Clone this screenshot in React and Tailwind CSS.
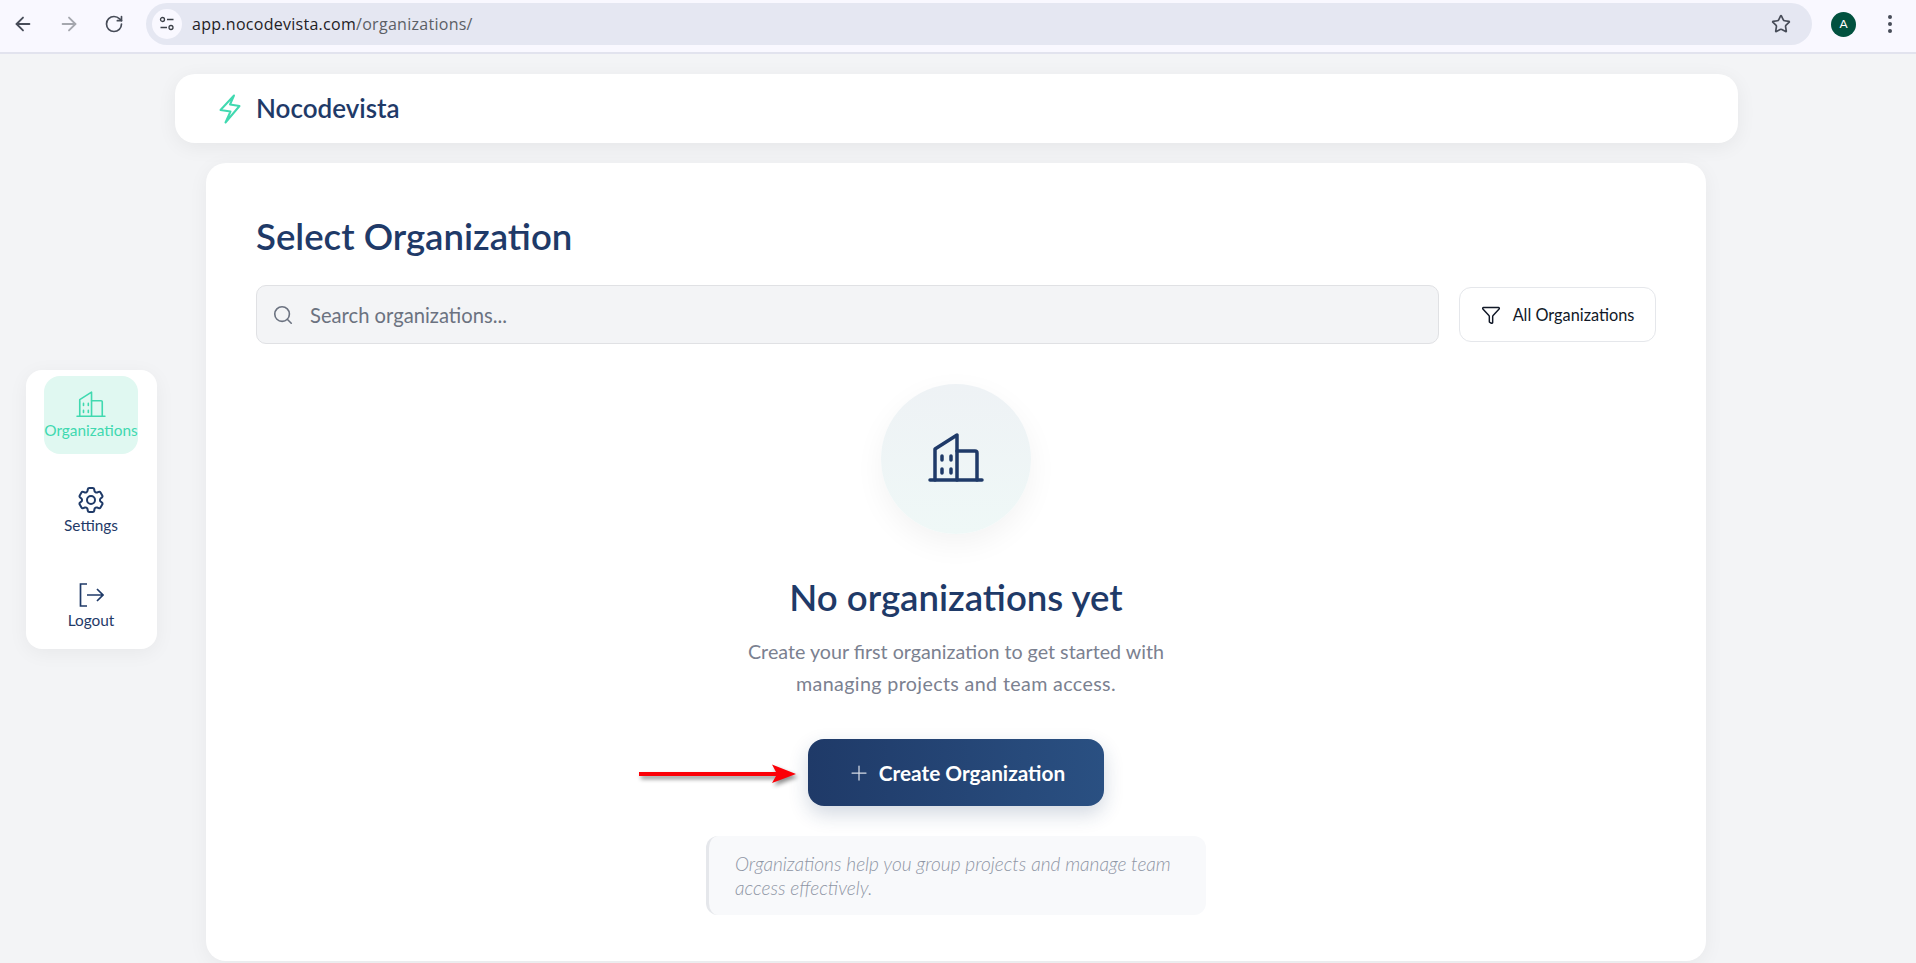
import React from "react";
import { ArrowLeft, ArrowRight, RotateCw, Star, Search, Funnel, Plus } from "lucide-react";
import { HiOutlineCog6Tooth } from "react-icons/hi2";

const font = { fontFamily: '"Lato", "Noto Sans", sans-serif' };

function Building({ className, sw = 3 }) {
  return (
    <svg viewBox="0 0 56 56" fill="none" stroke="currentColor" strokeWidth={sw} strokeLinecap="round" strokeLinejoin="round" className={className}>
      <path d="M2 49H54" />
      <path d="M7 49V18L29 4V49" />
      <path d="M29 20H47Q49 20 49 22V49" />
      <path d="M14 25V29M23 25V29M14 38V42M23 38V42" />
    </svg>
  );
}

function Logout({ className }) {
  return (
    <svg viewBox="0 0 26 26" fill="none" stroke="currentColor" strokeWidth="1.7" className={className}>
      <path d="M9 2H2.5V24H9" />
      <path d="M9 13H25M19 7L25 13L19 19" />
    </svg>
  );
}

function NavItem({ icon, label, active }) {
  return (
    <div className={`flex h-[78px] w-[94px] flex-col items-center justify-center rounded-2xl text-[15.4px] ${active ? "bg-[#e0f8f1] text-[#40d9b0]" : "text-[#1f3a68]"}`}>
      <div className="flex h-[29px] items-center">{icon}</div>
      <span className="leading-[20px]">{label}</span>
    </div>
  );
}

export default function App() {
  return (
    <div className="relative h-[963px] w-[1916px] overflow-hidden bg-[#f3f4f6]" style={font}>
      <div className="flex h-[54px] items-center border-b-2 border-[#e2e3ee] bg-[#f9f8ff] pb-[4px]">
        <div className="flex w-[146px] shrink-0 items-center gap-[24px] pl-[12px]">
          <ArrowLeft className="h-[22px] w-[22px] text-[#474c58]" strokeWidth={2} />
          <ArrowRight className="h-[22px] w-[22px] text-[#a5a7ae]" strokeWidth={2} />
          <RotateCw className="h-[20px] w-[20px] text-[#474c58]" strokeWidth={2} />
        </div>
        <div className="flex h-[42px] w-[1666px] shrink-0 items-center rounded-full bg-[#e5e7f2] pl-[6px] pr-[21px]">
          <div className="flex h-[30px] w-[30px] items-center justify-center rounded-full bg-[#f9f8ff]">
            <svg viewBox="0 0 16 16" fill="none" stroke="#3c4048" strokeWidth="1.3" className="h-[16px] w-[16px]">
              <circle cx="3.5" cy="3.5" r="2" />
              <path d="M8 3.5H14.5M1.5 11.5H8" />
              <circle cx="12" cy="11.5" r="2" />
            </svg>
          </div>
          <div className="ml-[10px] flex-1 text-[16px] tracking-[0.28px] text-[#1f2125]" style={{ fontFamily: '"Open Sans", sans-serif' }}>
            app.nocodevista.com<span className="text-[#5c5f66]">/organizations/</span>
          </div>
          <Star className="h-[20px] w-[20px] text-[#474c58]" strokeWidth={2} />
        </div>
        <div className="ml-[19px] flex h-[25px] w-[25px] shrink-0 items-center justify-center rounded-full bg-[#01513f] text-[12px] text-white">A</div>
        <div className="ml-[32px] flex shrink-0 flex-col gap-[3px]">
          <span className="h-[4px] w-[4px] rounded-full bg-[#474c58]" />
          <span className="h-[4px] w-[4px] rounded-full bg-[#474c58]" />
          <span className="h-[4px] w-[4px] rounded-full bg-[#474c58]" />
        </div>
      </div>

      <div className="flex">
        <div className="w-[175px] pl-[26px] pt-[316px]">
          <nav className="flex h-[279px] w-[131px] flex-col items-start gap-[17px] rounded-2xl bg-white pl-[18px] pt-[6px] shadow-[0_4px_20px_rgba(0,0,0,0.05)]">
            <NavItem active label="Organizations" icon={<Building className="h-[30px] w-[30px]" sw={3} />} />
            <NavItem label="Settings" icon={<HiOutlineCog6Tooth className="h-[32px] w-[32px]" />} />
            <NavItem label="Logout" icon={<Logout className="h-[26px] w-[26px]" />} />
          </nav>
        </div>

        <div className="flex w-[1563px] flex-col items-start pt-[20px]">
          <header className="flex h-[69px] w-full items-center gap-[15px] rounded-[20px] bg-white pl-[44px] shadow-[0_4px_20px_rgba(0,0,0,0.06)]">
            <svg viewBox="0 0 22 30" fill="none" stroke="#40d9b0" strokeWidth="2" strokeLinejoin="round" className="h-[30px] w-[22px]">
              <path d="M15 1.5L1.5 16L11.5 17.5L6.5 28.5L20.5 12L11 10.5Z" />
            </svg>
            <span className="text-[26px] font-semibold text-[#1f3a68]">Nocodevista</span>
          </header>

          <main className="ml-[31px] mt-[20px] flex h-[798px] w-[1500px] flex-col rounded-[20px] bg-white px-[50px] pt-[46px] shadow-[0_4px_20px_rgba(0,0,0,0.05)]">
            <h1 className="text-[36.6px] font-semibold leading-[54px] text-[#1f3a68]">Select Organization</h1>
            <div className="mt-[22px] flex items-center gap-[20px]">
              <div className="flex h-[59px] flex-1 items-center gap-[16px] rounded-[10px] border border-[#e0e1e4] bg-[#f3f4f6] pl-[15px]">
                <Search className="h-[22px] w-[22px] text-[#6b7280]" strokeWidth={1.75} />
                <span className="pt-[1px] text-[20.2px] text-[#6b7280]">Search organizations...</span>
              </div>
              <div className="flex h-[55px] w-[197px] items-center justify-center gap-[12px] rounded-[12px] border border-[#e5e7eb] bg-white text-[16.3px] text-[#111827]">
                <Funnel className="h-[20px] w-[20px]" strokeWidth={1.75} />
                <span className="pt-[1px]">All Organizations</span>
              </div>
            </div>

            <div className="flex flex-col items-center">
              <div className="mt-[40px] flex h-[150px] w-[150px] items-center justify-center rounded-full bg-gradient-to-b from-[#eef2f5] to-[#eff8f7] shadow-[0_10px_30px_rgba(0,0,0,0.05)]">
                <Building className="h-[56px] w-[56px] text-[#1f3a68]" sw={3.5} />
              </div>
              <h2 className="mt-[36px] text-[36.6px] font-semibold leading-[54px] text-[#1f3a68]">No organizations yet</h2>
              <p className="mt-[12px] w-[500px] text-center text-[19.7px] leading-[32px] text-[#7b8190]">
                Create your first organization to get started with
                <br />
                <span className="tracking-[0.36px]">managing projects and team access.</span>
              </p>
              <div className="relative mt-[39px]">
                <div className="flex h-[67px] w-[296px] items-center justify-center gap-[8px] rounded-[16px] bg-gradient-to-r from-[#1f3a68] to-[#2a5082] text-[20.8px] font-bold text-white shadow-[0_8px_20px_rgba(31,58,104,0.2)]">
                  <Plus className="h-[24px] w-[24px] text-[#d6dbe6]" strokeWidth={1.25} />
                  <span>Create Organization</span>
                </div>
                <svg viewBox="0 0 160 24" className="absolute left-[-170px] top-[23px] h-[24px] w-[160px]" style={{ filter: "drop-shadow(2px 3px 2px rgba(0,0,0,0.45))" }}>
                  <path d="M1 10H138L134 2.5L158 12L134 21L138 14H1Z" fill="#fb0007" />
                </svg>
              </div>
              <div className="mt-[30px] w-[500px] rounded-[12px] border-l-[3px] border-[#e5e7eb] bg-[#f8f9fb] pb-[15px] pl-[26px] pr-[20px] pt-[16px] text-[19.1px] font-light italic leading-[24px] text-[#8f96a5]">
                Organizations help you group projects and manage team access effectively.
              </div>
            </div>
          </main>
        </div>
      </div>
    </div>
  );
}
